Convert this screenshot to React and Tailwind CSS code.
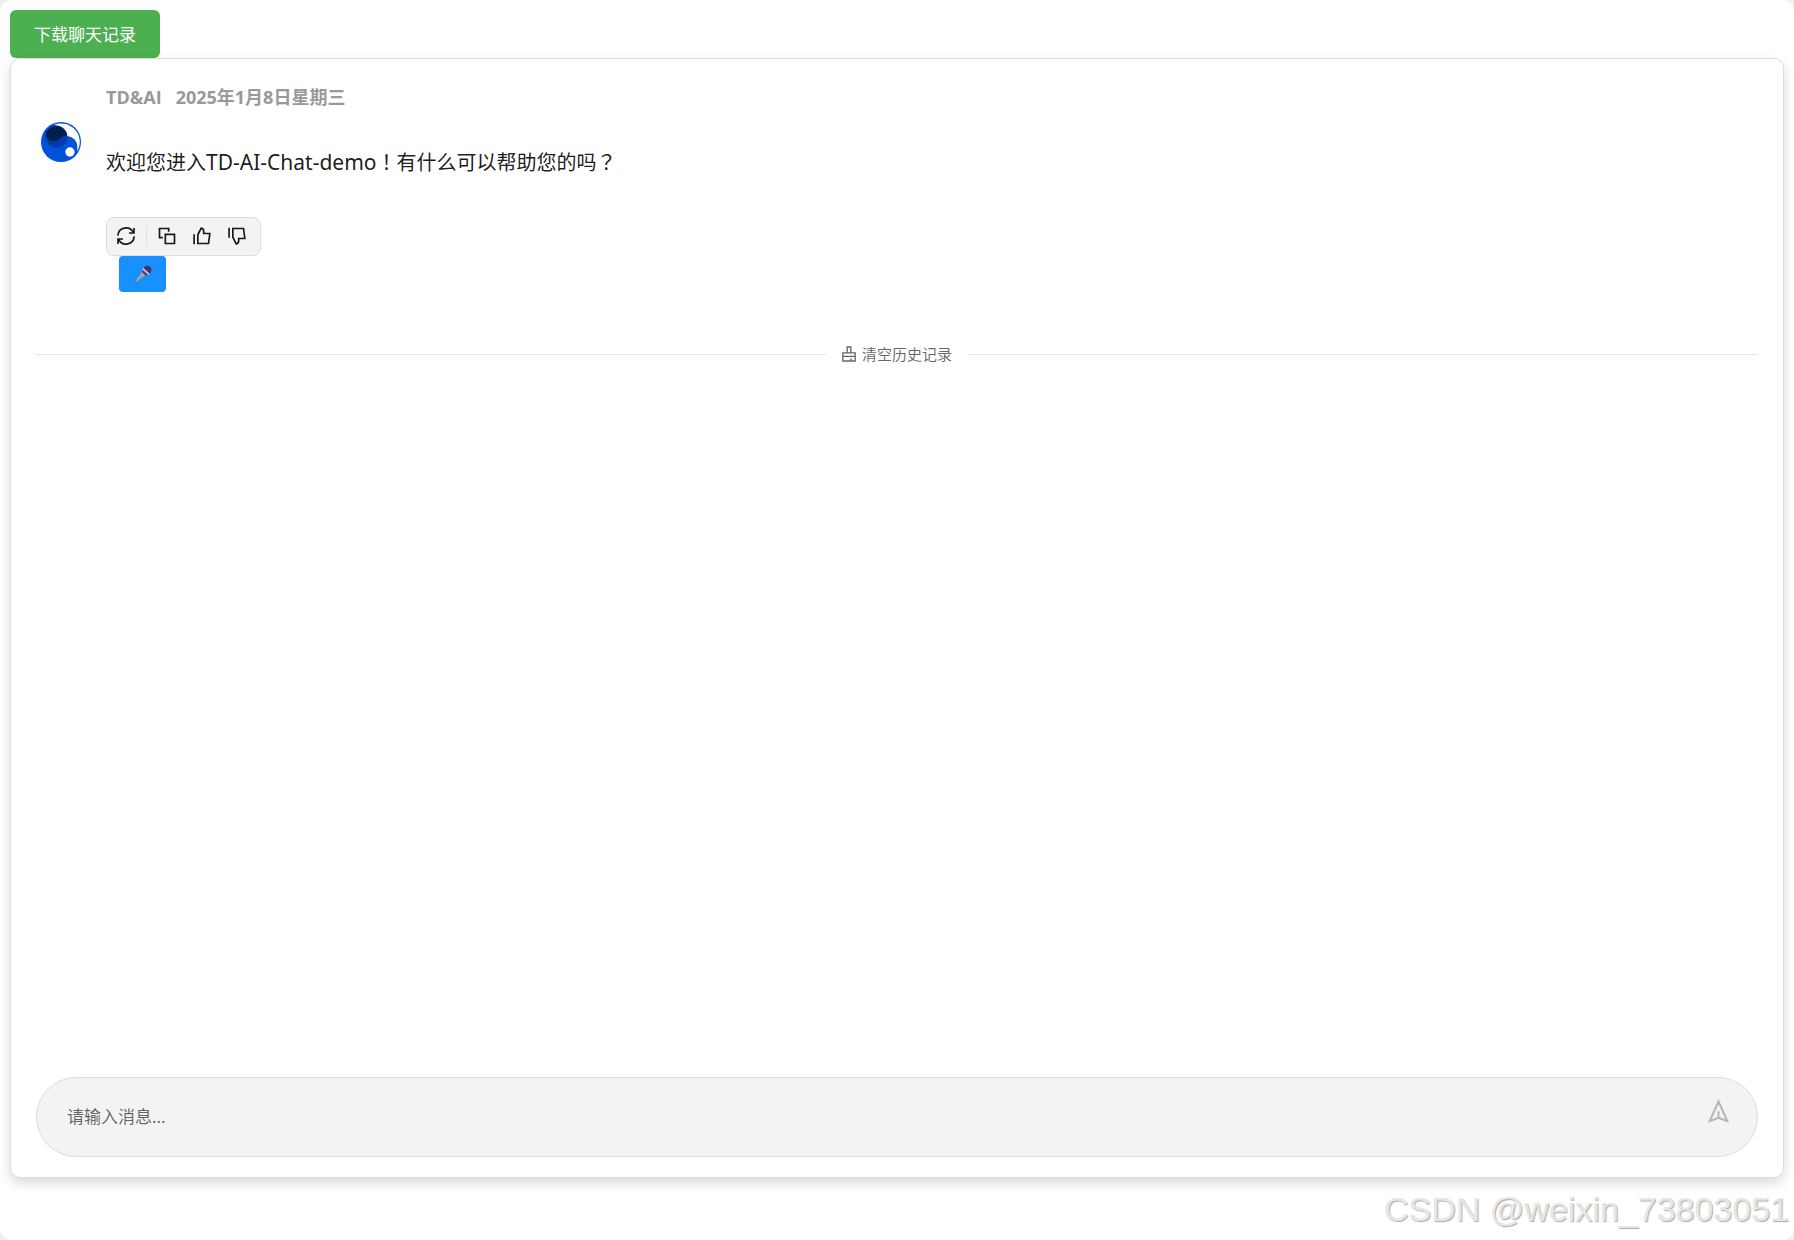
import React, { useState } from 'react';

const RefreshIcon = () => (
  <svg viewBox="0 0 24 24" className="h-5 w-5" fill="none" stroke="currentColor" strokeWidth="2">
    <path d="M2.2 11.5A9.8 9.8 0 0 1 20.7 7.6M21.6 2.4v6h-6M21.8 12.5A9.8 9.8 0 0 1 3.3 16.4M2.4 21.6v-6h6" />
  </svg>
);

const CopyIcon = () => (
  <svg viewBox="0 0 24 24" className="h-5 w-5" fill="none" stroke="currentColor" strokeWidth="2">
    <path d="M7 14H3V3h11v4" />
    <path d="M10 10h11v11H10z" />
  </svg>
);

const ThumbUpIcon = () => (
  <svg viewBox="0 0 24 24" className="h-5 w-5" fill="none" stroke="currentColor" strokeWidth="2">
    <path d="M2.5 10v12" />
    <path d="M7 21V10.5L11 2.6c1.8.4 3 1.8 3 3.4v3h7.4L19.8 21z" />
  </svg>
);

const ThumbDownIcon = () => (
  <svg viewBox="0 0 24 24" className="h-5 w-5" fill="none" stroke="currentColor" strokeWidth="2">
    <path d="M2.5 2v12" />
    <path d="M7 3v10.5L11 21.4c1.8-.4 3-1.8 3-3.4v-3h7.4L19.8 3z" />
  </svg>
);

const MicIcon = () => (
  <svg viewBox="0 0 54 54" className="h-[18px] w-[18px]">
    <path d="M24 21 34 31 9 49c-2 1.5-4.5-.5-3-3z" fill="#a9a4a8" />
    <path d="M19 32l4 4" stroke="#6d6872" strokeWidth="2" />
    <circle cx="40" cy="15" r="12.5" fill="#4a2d66" />
    <path d="M28 8 47 26l-4 4L25 14z" fill="#c9c4cc" />
    <path d="M26 14 42 30l-7 2-11-11z" fill="#5b3c77" />
  </svg>
);

const BrushIcon = () => (
  <svg viewBox="0 0 42 48" className="h-4 w-3.5" fill="none" stroke="currentColor" strokeWidth="4">
    <path d="M15.5 20V3h11v17M2.5 45V20.5h37V45zM2.5 31h37M27 45v-8" />
  </svg>
);

const SendIcon = () => (
  <svg viewBox="0 0 64 72" className="h-6 w-[21px]" fill="none" stroke="currentColor" strokeWidth="6">
    <path d="M32 7 5 67l27-10 27 10zM32 57V37" />
  </svg>
);

const Avatar = () => (
  <svg viewBox="33 36 120 120" className="h-10 w-10 shrink-0">
    <circle cx="93" cy="96" r="60" fill="#0052d9" />
    <path d="M72 44.5A56 56 0 0 1 142 124Q142 118 142 110A32 32 0 0 0 111 78Q108 49 72 44.5Z" fill="#fff" />
    <circle cx="79" cy="80" r="33" fill="#003cab" />
    <path d="M111 77A33 33 0 0 0 48 68C47 84 56 94 70 94C91 94 87 77 111 77Z" fill="#001f4d" />
    <circle cx="120" cy="126" r="14" fill="#fff" />
  </svg>
);

// full-width marks are centred in their box
const Mark = ({ children }) => <span className="font-['Noto_Sans_CJK_TC',sans-serif]">{children}</span>;

const actionClass = 'flex h-[30px] w-[30px] items-center justify-center rounded hover:bg-gray-200';

const App = () => {
  const [message, setMessage] = useState('');
  const [cleared, setCleared] = useState(false);

  const handleSubmit = (e) => {
    e.preventDefault();
    setMessage('');
  };

  return (
    <div className="bg-[#f0f0f0] font-['Noto_Sans','Noto_Sans_CJK_SC',sans-serif]">
      <div className="relative flex min-h-screen flex-col items-start rounded-xl bg-white px-2.5 pt-2.5 pb-[62px]">
        <button
          type="button"
          className="h-12 rounded-md bg-[#4caf50] px-6 pt-0.5 text-[17px] leading-6 text-white"
        >
          下载聊天记录
        </button>

        {/* Chat panel */}
        <main className="flex w-full flex-1 flex-col rounded-[10px] border border-[#dcdcdc] px-[25px] pt-[23px] pb-5 shadow-[0_5px_12px_rgba(0,0,0,0.15)]">
          {!cleared && (
            <div className="flex gap-[25px] pl-[5px]">
              <div className="pt-10">
                <Avatar />
              </div>
              <div>
                <div className="flex gap-3.5 font-['Open_Sans','Noto_Sans_CJK_SC',sans-serif] text-[18px] leading-[30px] font-bold text-[#999]">
                  <span>TD&amp;AI</span>
                  <span>2025年1月8日星期三</span>
                </div>
                <p className="mt-[35px] h-[30px] text-[20px] leading-[30px] text-black/90">
                  欢迎您进入<span className="text-[21px]">TD-AI-Chat-demo</span>
                  <Mark>！</Mark>有什么可以帮助您的吗<Mark>？</Mark>
                </p>
                <div className="mt-10 flex h-[39px] w-fit items-center gap-[5px] rounded-lg border border-[#dcdcdc] bg-[#f3f3f3] pr-2 pb-0.5 pl-1 text-black/90">
                  <button type="button" aria-label="重新生成" className={actionClass}>
                    <RefreshIcon />
                  </button>
                  <span className="h-5 w-px bg-[#e0e0e0]" />
                  <button type="button" aria-label="复制" className={actionClass}>
                    <CopyIcon />
                  </button>
                  <button type="button" aria-label="点赞" className={actionClass}>
                    <ThumbUpIcon />
                  </button>
                  <button type="button" aria-label="点踩" className={actionClass}>
                    <ThumbDownIcon />
                  </button>
                </div>
                <button
                  type="button"
                  aria-label="语音"
                  className="ml-[13px] flex h-9 w-[47px] items-center justify-center rounded bg-[#1890ff]"
                >
                  <MicIcon />
                </button>
              </div>
            </div>
          )}

          <div className="mt-[50px] flex items-center gap-4 text-black/60">
            <span className="h-px flex-1 bg-[#e7e7e7]" />
            <button
              type="button"
              onClick={() => setCleared(true)}
              className="flex items-center gap-1.5 text-[15px] leading-6"
            >
              <BrushIcon />
              清空历史记录
            </button>
            <span className="h-px flex-1 bg-[#e7e7e7]" />
          </div>

          {/* Message input */}
          <form
            onSubmit={handleSubmit}
            className="mt-auto flex h-20 items-center rounded-full border border-[#dcdcdc] bg-[#f3f3f3] pr-7 pl-[30px]"
          >
            <input
              type="text"
              aria-label="消息"
              placeholder="请输入消息..."
              value={message}
              onChange={(e) => setMessage(e.target.value)}
              className="min-w-0 flex-1 bg-transparent text-[17px] outline-none placeholder:text-black/60"
            />
            <button type="submit" aria-label="发送" className="pb-3 text-[#b5b5b5]">
              <SendIcon />
            </button>
          </form>
        </main>

        <span className="absolute right-[5px] bottom-[11px] font-['Liberation_Sans',sans-serif] text-[34px] leading-10 text-[#e6e6e6] [text-shadow:1px_1px_1px_#aaa]">
          CSDN @weixin_73803051
        </span>
      </div>
    </div>
  );
};

export default App;
